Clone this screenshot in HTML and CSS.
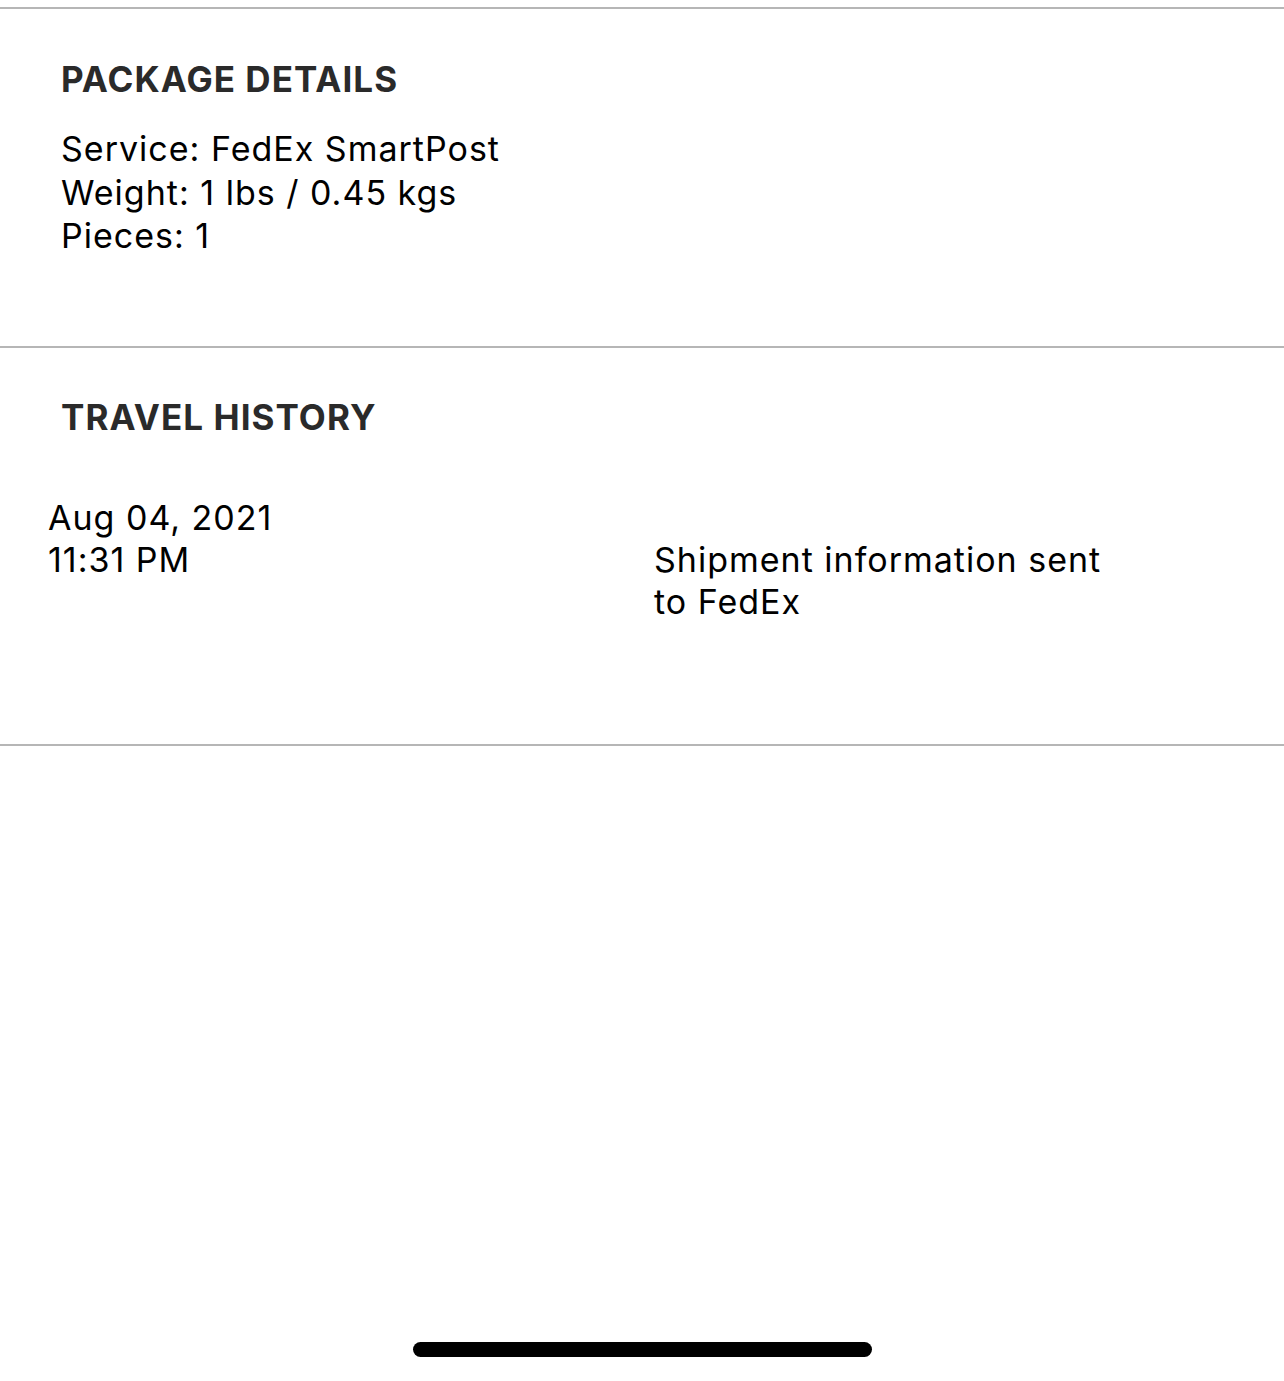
FILE: index.html
```html
<!DOCTYPE html>
<html lang="en">
<head>
    <meta charset="UTF-8">
    <meta name="viewport" content="width=device-width, initial-scale=1.0">
    <title>Package Details</title>
    <link rel="stylesheet" href="styles.css">
</head>
<body>
    <div id="screen">
        <div class="section details">
            <h2 class="section-title">PACKAGE DETAILS</h2>
            <div class="detail-lines">
                <div>Service: FedEx SmartPost</div>
                <div>Weight: 1 lbs / 0.45 kgs</div>
                <div>Pieces: 1</div>
            </div>
        </div>
        <div class="section history">
            <h2 class="section-title">TRAVEL HISTORY</h2>
            <div class="history-row">
                <div class="history-when">
                    <div>Aug 04, 2021</div>
                    <div>11:31 PM</div>
                </div>
                <div class="history-what">Shipment information sent to FedEx</div>
            </div>
        </div>
        <div class="home-bar-row">
            <div class="home-bar"></div>
        </div>
    </div>
</body>
</html>
```

FILE: styles.css
```css
* {
    margin: 0;
    padding: 0;
    box-sizing: border-box;
}

body, html {
    background: #fff;
    font-family: Inter, "Noto Sans", sans-serif;
    color: #000;
}

#screen {
    width: 1284px;
    height: 1381px;
    display: flex;
    flex-direction: column;
    padding-top: 7px;
}

.section {
    border-top: 2px solid #b6b6b6;
}

.details {
    height: 339px;
    padding: 50px 0 0 61px;
}

.history {
    height: 400px;
    padding: 49px 0 0 61px;
    border-bottom: 2px solid #b6b6b6;
}

.section-title {
    font-size: 35px;
    font-weight: 700;
    color: #2a2a2a;
    letter-spacing: 1.05px;
    line-height: 40px;
}

.detail-lines {
    margin-top: 28px;
    font-size: 34px;
    line-height: 43.5px;
    letter-spacing: 1px;
}

.history-row {
    display: flex;
    margin-top: 60px;
    margin-left: -13px;
    font-size: 34px;
    line-height: 42px;
    letter-spacing: 1px;
}

.history-when {
    width: 606px;
}

.history-what {
    margin-top: 42px;
    width: 470px;
}

.home-bar-row {
    flex: 1;
    display: flex;
    justify-content: center;
    align-items: flex-end;
    padding-bottom: 24px;
}

.home-bar {
    width: 459px;
    height: 15px;
    border-radius: 8px;
    background: #000;
}
```
